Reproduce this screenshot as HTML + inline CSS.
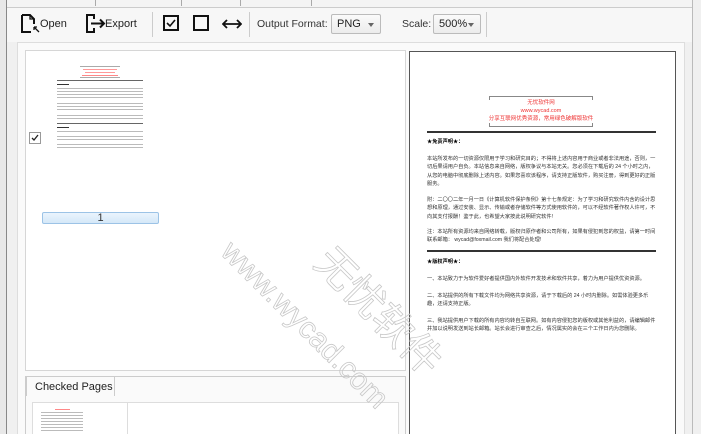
<!DOCTYPE html>
<html style="width:701px;height:434px;overflow:hidden"><head><meta charset="utf-8"><style>
*{box-sizing:border-box;margin:0;padding:0}
body{width:701px;height:434px;overflow:hidden;background:#f0f0f0;font-family:"Liberation Sans","Noto Sans CJK SC",sans-serif;position:relative;color:#222}
.a{position:absolute;white-space:nowrap}
.tb{font-size:11px;color:#222}
.doc{font-family:"Liberation Sans","Noto Sans CJK SC",sans-serif;font-size:5.2px;line-height:8.3px;color:#333;position:absolute;left:427px;width:230px;white-space:normal}
.dd{border:1px solid #bbb;border-radius:2px;background:linear-gradient(#fafafa,#ececec);height:20px;top:14px;font-size:11px;padding:3px 0 0 5px}
.dd:after{content:"";position:absolute;right:6px;top:8px;border:3px solid transparent;border-top:4px solid #666}
</style></head><body>
<div class="a" style="left:0;top:0;width:6px;height:434px;background:#e8e8e8"></div>
<div class="a" style="left:6px;top:0;width:1px;height:434px;background:#888"></div>
<div class="a" style="left:692px;top:0;width:1px;height:434px;background:#bbb"></div>
<div class="a" style="left:7px;top:0;width:685px;height:8px;background:#f4f4f4;border-bottom:1px solid #ccc"></div>
<div class="a" style="left:95px;top:0;width:1px;height:6px;background:#aaa"></div>
<div class="a" style="left:181px;top:0;width:1px;height:6px;background:#aaa"></div>
<div class="a" style="left:240px;top:0;width:1px;height:6px;background:#aaa"></div>
<div class="a" style="left:311px;top:0;width:1px;height:6px;background:#aaa"></div>
<div class="a" style="left:7px;top:8px;width:685px;height:34px;background:#f7f7f7"></div>
<svg class="a" style="left:20px;top:14px" width="22" height="20" viewBox="0 0 22 20"><path d="M2 1h8l4 4v5M2 1v17h9" fill="none" stroke="#111" stroke-width="2"/><path d="M10 1v4h4" fill="none" stroke="#111" stroke-width="1.3"/><path d="M14 13l5 5M14 13v3M14 13h3" fill="none" stroke="#111" stroke-width="1.3"/></svg>
<div class="a tb" style="left:40px;top:18px">Open</div>
<svg class="a" style="left:85px;top:14px" width="22" height="20" viewBox="0 0 22 20"><path d="M9 5V1H2v17h7v-4" fill="none" stroke="#111" stroke-width="2"/><path d="M6 9.5h13M15 5.5l4 4-4 4" fill="none" stroke="#111" stroke-width="2"/></svg>
<div class="a tb" style="left:105px;top:18px">Export</div>
<div class="a" style="left:152px;top:12px;width:1px;height:25px;background:#ccc"></div>
<svg class="a" style="left:163px;top:15px" width="17" height="17"><rect x="1" y="1" width="14" height="14" fill="none" stroke="#111" stroke-width="2"/><path d="M4 8l3 3 5-6" fill="none" stroke="#111" stroke-width="1.6"/></svg>
<svg class="a" style="left:193px;top:15px" width="17" height="17"><rect x="1" y="1" width="14" height="14" fill="none" stroke="#111" stroke-width="2"/></svg>
<svg class="a" style="left:222px;top:18px" width="20" height="12"><path d="M1 6h18M5 2L1 6l4 4M15 2l4 4-4 4" fill="none" stroke="#111" stroke-width="1.8"/></svg>
<div class="a" style="left:249px;top:12px;width:1px;height:25px;background:#ccc"></div>
<div class="a tb" style="left:257px;top:18px;color:#333;font-size:10.5px">Output Format:</div>
<div class="a dd" style="left:331px;width:50px">PNG</div>
<div class="a tb" style="left:402px;top:18px;color:#333;font-size:10.5px">Scale:</div>
<div class="a dd" style="left:433px;width:48px">500%</div>
<div class="a" style="left:486px;top:12px;width:1px;height:25px;background:#ccc"></div>
<div class="a" style="left:17px;top:42px;width:668px;height:392px;background:#fafafa;border:1px solid #ddd;border-bottom:none"></div>
<div class="a" style="left:25px;top:50px;width:381px;height:321px;background:#fff;border:1px solid #d6d6d6"></div>
<div class="a" style="left:55px;top:66px;width:90px;height:100px">
 <div class="a" style="left:25px;top:0;width:40px;height:12px;border-top:1px solid #aaa;border-bottom:1px solid #aaa"></div>
 <div class="a" style="left:28px;top:3px;width:34px;height:1px;background:#f99"></div>
 <div class="a" style="left:30px;top:6px;width:30px;height:1px;background:#f99"></div>
 <div class="a" style="left:27px;top:9px;width:36px;height:1px;background:#f88"></div>
 <div class="a" style="left:2px;top:14px;width:86px;height:1px;background:#666"></div>
 <div class="a" style="left:2px;top:18px;width:12px;height:1px;background:#333"></div>
 <div class="a" style="left:2px;top:22px;width:86px;height:11px;background:repeating-linear-gradient(#bbb 0 1px,transparent 1px 3px)"></div>
 <div class="a" style="left:2px;top:37px;width:86px;height:8px;background:repeating-linear-gradient(#bbb 0 1px,transparent 1px 3px)"></div>
 <div class="a" style="left:2px;top:49px;width:86px;height:5px;background:repeating-linear-gradient(#bbb 0 1px,transparent 1px 3px)"></div>
 <div class="a" style="left:2px;top:57px;width:86px;height:1px;background:#666"></div>
 <div class="a" style="left:2px;top:61px;width:12px;height:1px;background:#333"></div>
 <div class="a" style="left:2px;top:65px;width:86px;height:1px;background:#bbb"></div>
 <div class="a" style="left:2px;top:70px;width:86px;height:4px;background:repeating-linear-gradient(#bbb 0 1px,transparent 1px 3px)"></div>
 <div class="a" style="left:2px;top:78px;width:86px;height:4px;background:repeating-linear-gradient(#bbb 0 1px,transparent 1px 3px)"></div>
</div>
<svg class="a" style="left:29px;top:132px" width="12" height="12"><rect x=".5" y=".5" width="11" height="11" fill="#fff" stroke="#999"/><path d="M3 6l2 2 4-5" fill="none" stroke="#222" stroke-width="1.3"/></svg>
<div class="a" style="left:42px;top:212px;width:117px;height:12px;border:1px solid #9cc3e6;border-radius:2px;background:linear-gradient(#eaf4fd,#d5e8f8);font-size:11px;text-align:center;line-height:10px;color:#333">1</div>
<div class="a" style="left:25px;top:376px;width:381px;height:58px;border:1px solid #ccc;border-bottom:none;background:#fafafa"></div>
<div class="a" style="left:26px;top:376px;width:89px;height:20px;background:#fafafa;border:1px solid #ccc;border-bottom:none;font-size:11px;padding:4px 0 0 8px">Checked Pages</div>
<div class="a" style="left:27px;top:395px;width:87px;height:2px;background:#fafafa"></div>
<div class="a" style="left:32px;top:402px;width:367px;height:32px;background:#fff;border:1px solid #ddd;border-bottom:none"></div>
<div class="a" style="left:127px;top:402px;width:1px;height:32px;background:#ddd"></div>
<div class="a" style="left:41px;top:412px;width:42px;height:20px;background:repeating-linear-gradient(#bbb 0 1px,transparent 1px 3px)"></div>
<div class="a" style="left:55px;top:409px;width:15px;height:1px;background:#f88"></div>
<div class="a" style="left:409px;top:51px;width:267px;height:390px;background:#fff;border:1px solid #555"></div>
<div class="a" style="left:489px;top:96px;width:104px;height:31px;border-top:1px solid #888;border-bottom:1px solid #888"></div>
<div class="a" style="left:489px;top:96px;width:1px;height:4px;background:#888"></div>
<div class="a" style="left:592px;top:96px;width:1px;height:4px;background:#888"></div>
<div class="a" style="left:489px;top:123px;width:1px;height:4px;background:#888"></div>
<div class="a" style="left:592px;top:123px;width:1px;height:4px;background:#888"></div>
<div class="a" style="left:470px;top:99px;width:142px;text-align:center;font-size:5.5px;line-height:8px;color:#e33">无忧软件网<br>www.wycad.com<br>分享互联网优秀资源，常用绿色破解版软件</div>
<div class="a" style="left:427px;top:131px;width:229px;height:1.5px;background:#333"></div>
<div class="doc" style="top:138px;font-weight:bold;color:#000">★免责声明★：</div>
<div class="doc" style="top:155px">本站所发布的一切资源仅限用于学习和研究目的；不得将上述内容用于商业或者非法用途，否则，一切后果请用户自负。本站信息来自网络，版权争议与本站无关。您必须在下载后的 24 个小时之内，从您的电脑中彻底删除上述内容。如果您喜欢该程序，请支持正版软件，购买注册，得到更好的正版服务。</div>
<div class="doc" style="top:196px">附：二〇〇二年一月一日《计算机软件保护条例》第十七条规定：为了学习和研究软件内含的设计思想和原理，通过安装、显示、传输或者存储软件等方式使用软件的，可以不经软件著作权人许可，不向其支付报酬！鉴于此，也希望大家按此说明研究软件!</div>
<div class="doc" style="top:228px">注：本站所有资源均来自网络转载，版权归原作者和公司所有，如果有侵犯到您的权益，请第一时间联系邮箱： wycad@foxmail.com 我们将配合处理!</div>
<div class="a" style="left:427px;top:250px;width:229px;height:1.5px;background:#333"></div>
<div class="doc" style="top:258px;font-weight:bold;color:#000">★版权声明★：</div>
<div class="doc" style="top:275px">一、本站致力于为软件爱好者提供国内外软件开发技术和软件共享，着力为用户提供优资资源。</div>
<div class="doc" style="top:292px">二、本站提供的所有下载文件均为网络共享资源，请于下载后的 24 小时内删除。如需体验更多乐趣，还请支持正版。</div>
<div class="doc" style="top:317px">三、我站提供用户下载的所有内容均转自互联网。如有内容侵犯您的版权或其他利益的，请编辑邮件并加以说明发送到站长邮箱。站长会进行审查之后，情况属实的会在三个工作日内为您删除。</div>
<div class="a" style="left:684px;top:42px;width:8px;height:392px;background:#f0f0f0;border-left:1px solid #ddd"></div>
<div class="a" style="left:238px;top:235px;transform:rotate(45deg);transform-origin:left top;font-size:30px;color:transparent;-webkit-text-stroke:0.8px #c8c8c8;font-family:'Liberation Sans',sans-serif">www.wycad.com</div>
<div class="a" style="left:345px;top:232px;transform:rotate(45deg);transform-origin:left top;font-size:40px;color:transparent;-webkit-text-stroke:0.8px #c8c8c8;font-family:'Liberation Sans','Noto Sans CJK SC',sans-serif">无忧软件</div>
</body></html>
